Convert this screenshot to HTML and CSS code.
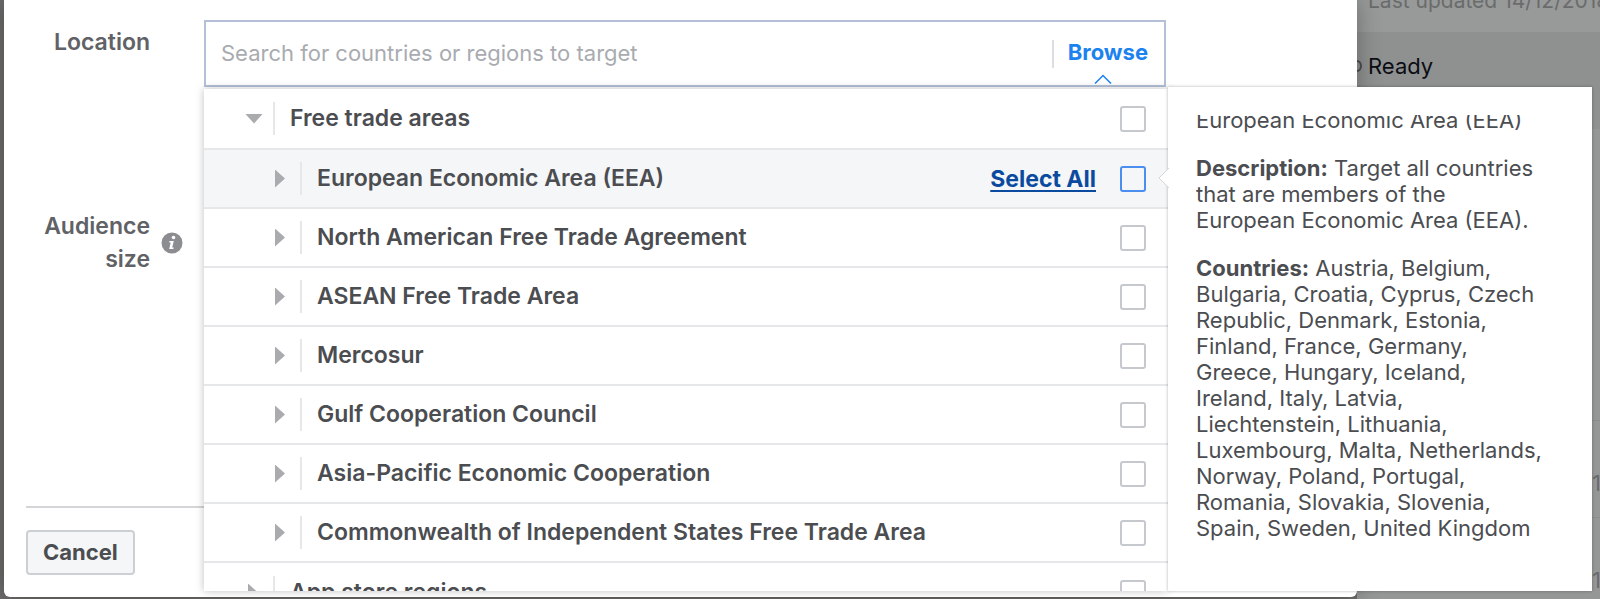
FILE: index.html
```
<!DOCTYPE html>
<html lang="en">
<head>
    <meta charset="UTF-8">
    <meta name="viewport" content="width=device-width, initial-scale=1.0">
    <title>Create audience</title>
    <link rel="stylesheet" href="styles.css">
</head>
<body>

    <main class="dialog">
        <form class="form">
            <label class="form-label" for="location">Location</label>
            <div class="field">
                <div class="search">
                    <input type="text" id="location" placeholder="Search for countries or regions to target">
                    <button type="button" class="browse">Browse</button>
                    <svg class="caret" width="18" height="10" viewBox="0 0 18 10"><path d="M1 9.500L9 1.500L17 9.500" fill="none" stroke="#1c82ef" stroke-width="1.500"/></svg>
                </div>

                <div class="dropdown">
                    <div class="row group">
                        <button type="button" class="toggle open" aria-label="Collapse"></button>
                        <label for="c0">Free trade areas</label>
                        <input type="checkbox" id="c0">
                    </div>
                    <div class="row active">
                        <button type="button" class="toggle" aria-label="Expand"></button>
                        <label for="c1">European Economic Area (EEA)</label>
                        <a href="#" class="select-all">Select All</a>
                        <input type="checkbox" id="c1">
                    </div>
                    <div class="row">
                        <button type="button" class="toggle" aria-label="Expand"></button>
                        <label for="c2">North American Free Trade Agreement</label>
                        <input type="checkbox" id="c2">
                    </div>
                    <div class="row">
                        <button type="button" class="toggle" aria-label="Expand"></button>
                        <label for="c3">ASEAN Free Trade Area</label>
                        <input type="checkbox" id="c3">
                    </div>
                    <div class="row">
                        <button type="button" class="toggle" aria-label="Expand"></button>
                        <label for="c4">Mercosur</label>
                        <input type="checkbox" id="c4">
                    </div>
                    <div class="row">
                        <button type="button" class="toggle" aria-label="Expand"></button>
                        <label for="c5">Gulf Cooperation Council</label>
                        <input type="checkbox" id="c5">
                    </div>
                    <div class="row">
                        <button type="button" class="toggle" aria-label="Expand"></button>
                        <label for="c6">Asia-Pacific Economic Cooperation</label>
                        <input type="checkbox" id="c6">
                    </div>
                    <div class="row">
                        <button type="button" class="toggle" aria-label="Expand"></button>
                        <label for="c7">Commonwealth of Independent States Free Trade Area</label>
                        <input type="checkbox" id="c7">
                    </div>
                    <div class="row group">
                        <button type="button" class="toggle" aria-label="Expand"></button>
                        <label for="c8">App store regions</label>
                        <input type="checkbox" id="c8">
                    </div>
                </div>

                <div class="flyout">
                    <svg class="pointer" width="11" height="20" viewBox="0 0 11 20"><path d="M11 0L1 10L11 20" fill="#fff" stroke="#d4d6d9"/></svg>
                    <div class="flyout-body">
                        <p>European Economic Area (EEA)</p>
                        <p><b>Description:</b> Target all countries that are members of the European Economic Area (EEA).</p>
                        <p><b>Countries:</b> Austria, Belgium, Bulgaria, Croatia, Cyprus, Czech Republic, Denmark, Estonia, Finland, France, Germany, Greece, Hungary, Iceland, Ireland, Italy, Latvia, Liechtenstein, Lithuania, Luxembourg, Malta, Netherlands, Norway, Poland, Portugal, Romania, Slovakia, Slovenia, Spain, Sweden, United Kingdom</p>
                    </div>
                </div>
            </div>

            <div class="form-label audience">
                <span>Audience size</span>
                <svg class="info" width="22" height="22" viewBox="0 0 22 22">
                    <circle cx="11" cy="11" r="10.500" fill="#8b8d90"/>
                    <circle cx="12.500" cy="5.500" r="1.800" fill="#fff"/>
                    <path d="M8.500 9h4.300l-1.600 6.500h1.500l-.3 1.500H8.200l1.500-6.500H8.200z" fill="#fff"/>
                </svg>
            </div>
        </form>

        <div class="footer">
            <button type="button" class="cancel">Cancel</button>
        </div>
    </main>

    <!-- audience list behind the dialog -->
    <aside class="list">
        <div class="list-row first">Last updated 14/12/2018</div>
        <div class="list-row ready"><span class="dot"></span>Ready</div>
        <div class="list-row"></div>
        <div class="list-row"></div>
        <div class="list-row"></div>
        <div class="list-row count">1</div>
        <div class="list-row count">1</div>
    </aside>

</body>
</html>
```
FILE: styles.css
```
* {
    box-sizing: border-box;
}
body {
    display: flex;
    height: 100vh;
    margin: 0;
    padding-left: 4px;
    overflow: hidden;
    font-family: Inter, "Liberation Sans", sans-serif;
    font-size: 22px;
    color: #4b4d51;
    background-color: #6d6c6b;
}
button, input {
    font: inherit;
    color: inherit;
}
.dialog {
    position: relative;
    z-index: 1;
    flex: 1;
    display: flex;
    flex-direction: column;
    margin-bottom: 2px;
    padding: 20px 22px 22px;
    background-color: #fff;
    border-radius: 0 0 6px 6px;
    box-shadow: 0 0 24px rgba(0, 0, 0, 0.3);
}
.form {
    flex: 1;
    display: grid;
    grid-template-columns: 124px 1fr;
    grid-template-rows: 67px auto;
    column-gap: 54px;
}
.form-label {
    padding-top: 6px;
    font-size: 23px;
    font-weight: 600;
    line-height: 33px;
    text-align: right;
    color: #606266;
}
.field {
    position: relative;
    margin-right: 169px;
}
.search {
    position: relative;
    display: flex;
    align-items: center;
    height: 67px;
    border: 2px solid #b3c0d8;
}
.search input {
    flex: 1;
    min-width: 0;
    padding: 0 15px 2px;
    border: 0;
    outline: none;
    background: none;
}
.search input::placeholder {
    color: #a9abb0;
    opacity: 1;
}
.browse {
    padding: 0 16px 4px 14px;
    border: 0;
    border-left: 2px solid #dadde1;
    background: none;
    font-weight: 700;
    line-height: 24px;
    color: #1c82ef;
    cursor: pointer;
}
.caret {
    position: absolute;
    right: 52px;
    bottom: 1px;
}
.dropdown {
    position: absolute;
    top: 69px;
    left: 0;
    right: -2px;
    height: 502px;
    overflow: hidden;
    background-color: #fff;
    box-shadow: 0 0 8px rgba(0, 0, 0, 0.25);
}
.row {
    display: flex;
    align-items: center;
    height: 59px;
    padding: 0 22px 0 71px;
    border-bottom: 2px solid #e6e7e9;
    font-size: 23px;
    font-weight: 600;
}
.row.group {
    height: 61px;
    padding-left: 44px;
}
.row.active {
    background-color: #f5f6f7;
}
.row label {
    flex: 1;
    margin-left: 15px;
    padding-left: 15px;
    border-left: 2px solid #e6e7e9;
    line-height: 33px;
}
.toggle {
    width: 10px;
    height: 18px;
    padding: 0;
    border: 0;
    background-color: #a9abae;
    clip-path: polygon(0 0, 100% 50%, 0 100%);
    cursor: pointer;
}
.toggle.open {
    width: 18px;
    height: 10px;
    margin: 0 -5px 0 -3px;
    clip-path: polygon(0 0, 100% 0, 50% 100%);
}
.row input {
    appearance: none;
    width: 26px;
    height: 26px;
    margin: 0;
    border: 2px solid #c5c8cd;
    border-radius: 3px;
    background-color: #fff;
}
.row.active input {
    border-color: #4a8ef0;
    background-color: #f5f6f7;
}
.select-all {
    margin-right: 24px;
    font-weight: 700;
    color: #0b4b9f;
    text-underline-offset: 3px;
}
.flyout {
    position: absolute;
    top: 67px;
    left: 100%;
    width: 424px;
    height: 504px;
    margin-left: 2px;
    padding: 28px 46px 27px 28px;
    background-color: #fff;
    box-shadow: 0 0 3px rgba(0, 0, 0, 0.3);
}
.flyout-body {
    height: 100%;
    overflow: hidden;
}
.flyout p {
    margin: 0 0 22px;
    line-height: 26px;
}
.flyout p:first-child {
    margin-top: -8px;
}
.flyout b {
    font-weight: 700;
}
.pointer {
    position: absolute;
    top: 81px;
    left: -10px;
}
.audience {
    display: flex;
    align-items: center;
    gap: 11px;
    height: 66px;
    margin: 123px -33px 0 0;
    padding: 0;
}
.audience span {
    flex: 1;
}
.footer {
    padding-top: 22px;
    border-top: 2px solid #d4d5d7;
}
.cancel {
    display: block;
    height: 45px;
    padding: 0 15px;
    border: 2px solid #ccd0d5;
    border-radius: 4px;
    background-color: #f5f6f7;
    font-weight: 700;
    line-height: 33px;
    cursor: pointer;
}
.list {
    width: 243px;
    background-color: #959796;
    color: #6a6c6c;
    white-space: nowrap;
}
.list-row {
    height: 97px;
    padding-left: 11px;
}
.list-row.first {
    display: flex;
    align-items: flex-end;
    height: 32px;
    padding-bottom: 19px;
    background-color: #989a99;
    font-size: 21px;
}
.list-row.ready {
    display: flex;
    align-items: center;
    gap: 6px;
    padding: 0 0 29px;
    background-color: #8f9190;
    color: #0c0d14;
}
.dot {
    width: 10px;
    height: 12px;
    margin-left: -5px;
    border: 2px solid #4c4e52;
    border-radius: 50%;
}
.list-row.count {
    padding: 49px 0 0 235px;
    border-top: 1px solid #8c8e8d;
}
```
